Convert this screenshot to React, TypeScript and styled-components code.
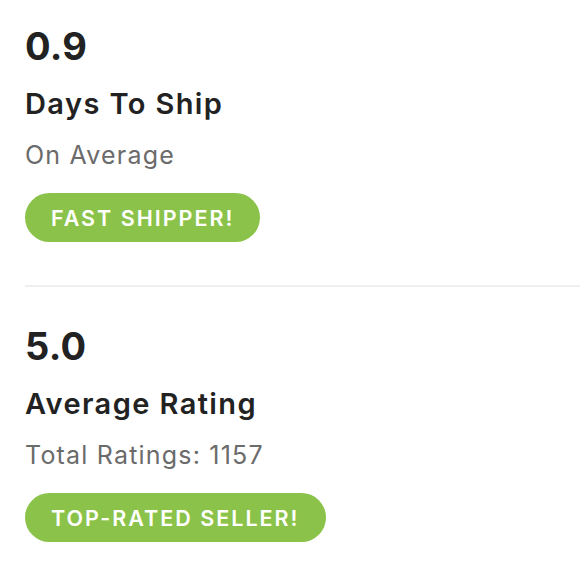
import styled, { createGlobalStyle } from "styled-components";

const GlobalStyle = createGlobalStyle`
  html, body {
    margin: 0;
    padding: 0;
    background: #ffffff;
  }
  body {
    font-family: Inter, "Open Sans", Arial, sans-serif;
    color: #222222;
  }
`;

type Stat = {
  value: string;
  title: string;
  sub: string;
  badge: string;
};

const stats: Stat[] = [
  { value: "0.9", title: "Days To Ship", sub: "On Average", badge: "FAST SHIPPER!" },
  { value: "5.0", title: "Average Rating", sub: "Total Ratings: 1157", badge: "TOP-RATED SELLER!" },
];

const App = () => {
  return (
    <>
      <GlobalStyle />
      <Page>
        {stats.map((s, i) => (
          <Section key={s.value} last={i === stats.length - 1}>
            <Value>{s.value}</Value>
            <Title>{s.title}</Title>
            <Sub>{s.sub}</Sub>
            <Badge>{s.badge}</Badge>
          </Section>
        ))}
      </Page>
    </>
  );
};

export default App;

const Page = styled.div`
  width: 580px;
  height: 580px;
  overflow: hidden;
  padding-left: 25px;
  padding-top: 26px;
  box-sizing: border-box;
`;

const Section = styled.div<{ last: boolean }>`
  display: flex;
  flex-direction: column;
  align-items: flex-start;
  padding-bottom: 43px;
  margin-bottom: 39px;
  border-bottom: ${(p) => (p.last ? "none" : "2px solid #efefef")};
`;

const Value = styled.div`
  font-size: 38px;
  line-height: 40px;
  font-weight: 700;
  letter-spacing: 0.3px;
  color: #222222;
`;

const Title = styled.div`
  margin-top: 22px;
  font-size: 29px;
  line-height: 32px;
  font-weight: 600;
  letter-spacing: 1.4px;
  color: #222222;
`;

const Sub = styled.div`
  margin-top: 21px;
  font-size: 25px;
  line-height: 28px;
  font-weight: 400;
  letter-spacing: 1.2px;
  color: #6b6b6b;
`;

const Badge = styled.div`
  margin-top: 24px;
  height: 49px;
  padding: 0 26px;
  display: flex;
  align-items: center;
  border-radius: 25px;
  background: #8bc34a;
  color: #ffffff;
  font-size: 21.5px;
  font-weight: 600;
  letter-spacing: 2px;
`;
